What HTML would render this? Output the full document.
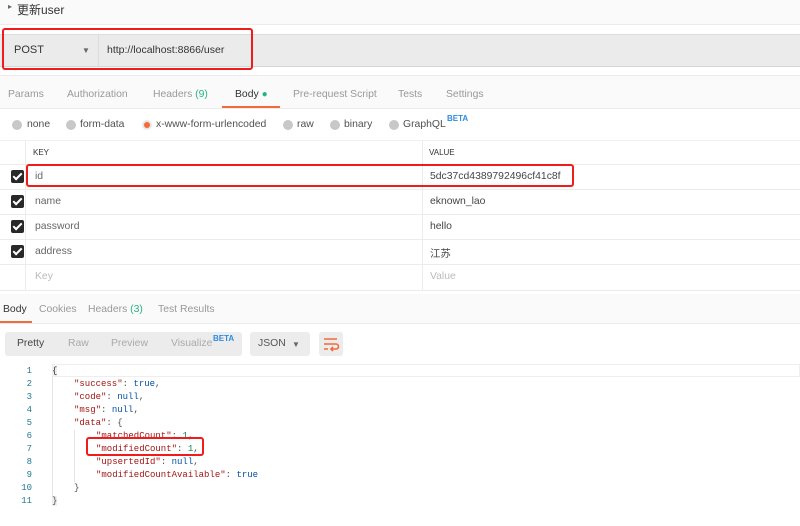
<!DOCTYPE html>
<html><head><meta charset="utf-8"><style>
*{margin:0;padding:0;box-sizing:border-box}
body{width:800px;height:526px;overflow:hidden;background:#fff;font-family:"Liberation Sans","Noto Sans CJK SC",sans-serif;font-size:10.4px;color:#505050;position:relative}
.a{position:absolute;white-space:nowrap}
.mono{font-family:"Liberation Mono","DejaVu Sans Mono",monospace;font-size:9px}
.rb{position:absolute;border:2px solid #f01c1c;border-radius:3px}
.cb{position:absolute;left:11px;width:13px;height:13px;background:#282828;border-radius:2px}
.cb:after{content:"";position:absolute;left:4px;top:1px;width:3px;height:7px;border:solid #fff;border-width:0 2px 2px 0;transform:rotate(45deg)}
.rad{position:absolute;width:10px;height:10px;border-radius:50%;background:#c8c8c8;top:120px}
.hl{position:absolute;left:28px;right:0;height:1px;background:#ececec}
.k{color:#a31515}.b{color:#0451a5}.n{color:#098658}
.ln{position:absolute;width:30px;text-align:right;color:#237893}
</style></head><body>
<div class="a" style="left:0;top:0;width:800px;height:25px;background:#fafafa;border-bottom:1px solid #ececec"></div>
<div class="a" style="left:8px;top:2px;font-size:8px;color:#666">▸</div>
<div class="a" style="left:17px;top:1px;font-size:12px;color:#333">更新user</div>
<div class="a" style="left:0;top:34px;width:800px;height:33px;background:#ebebeb;border-top:1px solid #dcdcdc;border-bottom:1px solid #d6d6d6"></div>
<div class="a" style="left:98px;top:35px;width:1px;height:31px;background:#dcdcdc"></div>
<div class="a" style="left:14px;top:44px;font-size:11px;color:#333">POST</div>
<div class="a" style="left:82px;top:46px;font-size:8px;color:#666">▼</div>
<div class="a" style="left:107px;top:44px;font-size:10.5px;color:#333">http://localhost:8866/user</div>
<div class="rb" style="left:2px;top:28px;width:251px;height:42px"></div>
<div class="a" style="left:0;top:75px;width:800px;height:34px;background:#fafafa;border-top:1px solid #ececec;border-bottom:1px solid #ececec"></div>
<div class="a" style="left:8px;top:89px;color:#999">Params</div>
<div class="a" style="left:67px;top:89px;color:#999">Authorization</div>
<div class="a" style="left:153px;top:89px;color:#999">Headers <span style="color:#26b47f">(9)</span></div>
<div class="a" style="left:235px;top:89px;color:#333">Body <span style="color:#26b47f;font-size:10px">●</span></div>
<div class="a" style="left:222px;top:106px;width:58px;height:2px;background:#f26b3a"></div>
<div class="a" style="left:293px;top:89px;color:#999">Pre-request Script</div>
<div class="a" style="left:398px;top:89px;color:#999">Tests</div>
<div class="a" style="left:446px;top:89px;color:#999">Settings</div>
<div class="rad" style="left:12px"></div><div class="a" style="left:27px;top:119px">none</div>
<div class="rad" style="left:66px"></div><div class="a" style="left:80px;top:119px">form-data</div>
<div class="rad" style="left:142px;background:#e8e8e8"><div style="position:absolute;left:2px;top:2px;width:6px;height:6px;border-radius:50%;background:#f26b3a"></div></div><div class="a" style="left:156px;top:119px">x-www-form-urlencoded</div>
<div class="rad" style="left:283px"></div><div class="a" style="left:297px;top:119px">raw</div>
<div class="rad" style="left:330px"></div><div class="a" style="left:344px;top:119px">binary</div>
<div class="rad" style="left:389px"></div><div class="a" style="left:403px;top:119px">GraphQL</div>
<div class="a" style="left:447px;top:114px;font-size:8px;color:#2d8de0;font-weight:bold">BETA</div>
<div class="a" style="left:0;top:140px;width:800px;height:1px;background:#f0f0f0"></div>
<div class="a" style="left:25px;top:140px;width:1px;height:151px;background:#ececec"></div>
<div class="a" style="left:422px;top:140px;width:1px;height:151px;background:#ececec"></div>
<div class="a" style="left:33px;top:148px;font-size:8px;color:#333">KEY</div>
<div class="a" style="left:429px;top:148px;font-size:8px;color:#333">VALUE</div>
<div class="hl" style="left:0;top:164px"></div>
<div class="hl" style="left:0;top:189px"></div>
<div class="hl" style="left:0;top:214px"></div>
<div class="hl" style="left:0;top:239px"></div>
<div class="hl" style="left:0;top:264px"></div>
<div class="hl" style="left:0;top:290px"></div>
<div class="cb" style="top:170px"></div><div class="a" style="left:35px;top:171px;color:#666">id</div><div class="a" style="left:430px;top:171px;color:#444">5dc37cd4389792496cf41c8f</div>
<div class="cb" style="top:195px"></div><div class="a" style="left:35px;top:196px;color:#666">name</div><div class="a" style="left:430px;top:196px;color:#444">eknown_lao</div>
<div class="cb" style="top:220px"></div><div class="a" style="left:35px;top:221px;color:#666">password</div><div class="a" style="left:430px;top:221px;color:#444">hello</div>
<div class="cb" style="top:245px"></div><div class="a" style="left:35px;top:246px;color:#666">address</div><div class="a" style="left:430px;top:245px;color:#444">江苏</div>
<div class="a" style="left:35px;top:271px;color:#bbb">Key</div><div class="a" style="left:430px;top:271px;color:#bbb">Value</div>
<div class="rb" style="left:26px;top:164px;width:548px;height:23px"></div>
<div class="a" style="left:0;top:294px;width:800px;height:30px;background:#fafafa;border-bottom:1px solid #ececec"></div>
<div class="a" style="left:3px;top:304px;color:#333">Body</div>
<div class="a" style="left:0;top:321px;width:32px;height:2px;background:#f26b3a"></div>
<div class="a" style="left:39px;top:304px;color:#999">Cookies</div>
<div class="a" style="left:88px;top:304px;color:#999">Headers <span style="color:#26b47f">(3)</span></div>
<div class="a" style="left:158px;top:304px;color:#999">Test Results</div>
<div class="a" style="left:5px;top:332px;width:237px;height:24px;background:#ececec;border-radius:3px"></div>
<div class="a" style="left:17px;top:338px;color:#444">Pretty</div>
<div class="a" style="left:68px;top:338px;color:#aaa">Raw</div>
<div class="a" style="left:111px;top:338px;color:#aaa">Preview</div>
<div class="a" style="left:171px;top:338px;color:#aaa">Visualize</div>
<div class="a" style="left:213px;top:334px;font-size:8px;color:#2d8de0;font-weight:bold">BETA</div>
<div class="a" style="left:250px;top:332px;width:60px;height:24px;background:#ececec;border-radius:3px"></div>
<div class="a" style="left:258px;top:338px;color:#555">JSON</div>
<div class="a" style="left:292px;top:340px;font-size:8px;color:#666">▼</div>
<div class="a" style="left:319px;top:332px;width:24px;height:24px;background:#ececec;border-radius:3px"></div>
<svg class="a" style="left:322px;top:336px" width="18" height="16" viewBox="0 0 18 16"><path d="M2 3h13M2 8h12a2.5 2.5 0 0 1 0 5h-4M2 13h4M11 11l-2 2 2 2" stroke="#f26b3a" stroke-width="1.6" fill="none"/></svg>
<div class="a" style="left:52px;top:364px;width:748px;height:13px;border:1px solid #eee;border-left:none"></div>
<div class="a" style="left:52px;top:364px;width:1px;height:142px;background:#e4e4e4"></div>
<div class="a" style="left:74px;top:430px;width:1px;height:52px;background:#e4e4e4"></div>
<div class="mono">
<div class="ln a" style="left:2px;top:366px">1</div>
<div class="ln a" style="left:2px;top:379px">2</div>
<div class="ln a" style="left:2px;top:392px">3</div>
<div class="ln a" style="left:2px;top:405px">4</div>
<div class="ln a" style="left:2px;top:418px">5</div>
<div class="ln a" style="left:2px;top:431px">6</div>
<div class="ln a" style="left:2px;top:444px">7</div>
<div class="ln a" style="left:2px;top:457px">8</div>
<div class="ln a" style="left:2px;top:470px">9</div>
<div class="ln a" style="left:2px;top:483px">10</div>
<div class="ln a" style="left:2px;top:496px">11</div>
<div class="a" style="left:52px;top:366px;background:#eee;color:#333">{</div>
<div class="a" style="left:74px;top:379px"><span class="k">"success"</span>: <span class="b">true</span>,</div>
<div class="a" style="left:74px;top:392px"><span class="k">"code"</span>: <span class="b">null</span>,</div>
<div class="a" style="left:74px;top:405px"><span class="k">"msg"</span>: <span class="b">null</span>,</div>
<div class="a" style="left:74px;top:418px"><span class="k">"data"</span>: {</div>
<div class="a" style="left:96px;top:431px"><span class="k">"matchedCount"</span>: <span class="n">1</span>,</div>
<div class="a" style="left:96px;top:444px"><span class="k">"modifiedCount"</span>: <span class="n">1</span>,</div>
<div class="a" style="left:96px;top:457px"><span class="k">"upsertedId"</span>: <span class="b">null</span>,</div>
<div class="a" style="left:96px;top:470px"><span class="k">"modifiedCountAvailable"</span>: <span class="b">true</span></div>
<div class="a" style="left:74px;top:483px">}</div>
<div class="a" style="left:52px;top:496px;background:#eee">}</div>
</div>
<div class="rb" style="left:86px;top:437px;width:118px;height:19px"></div>
</body></html>
